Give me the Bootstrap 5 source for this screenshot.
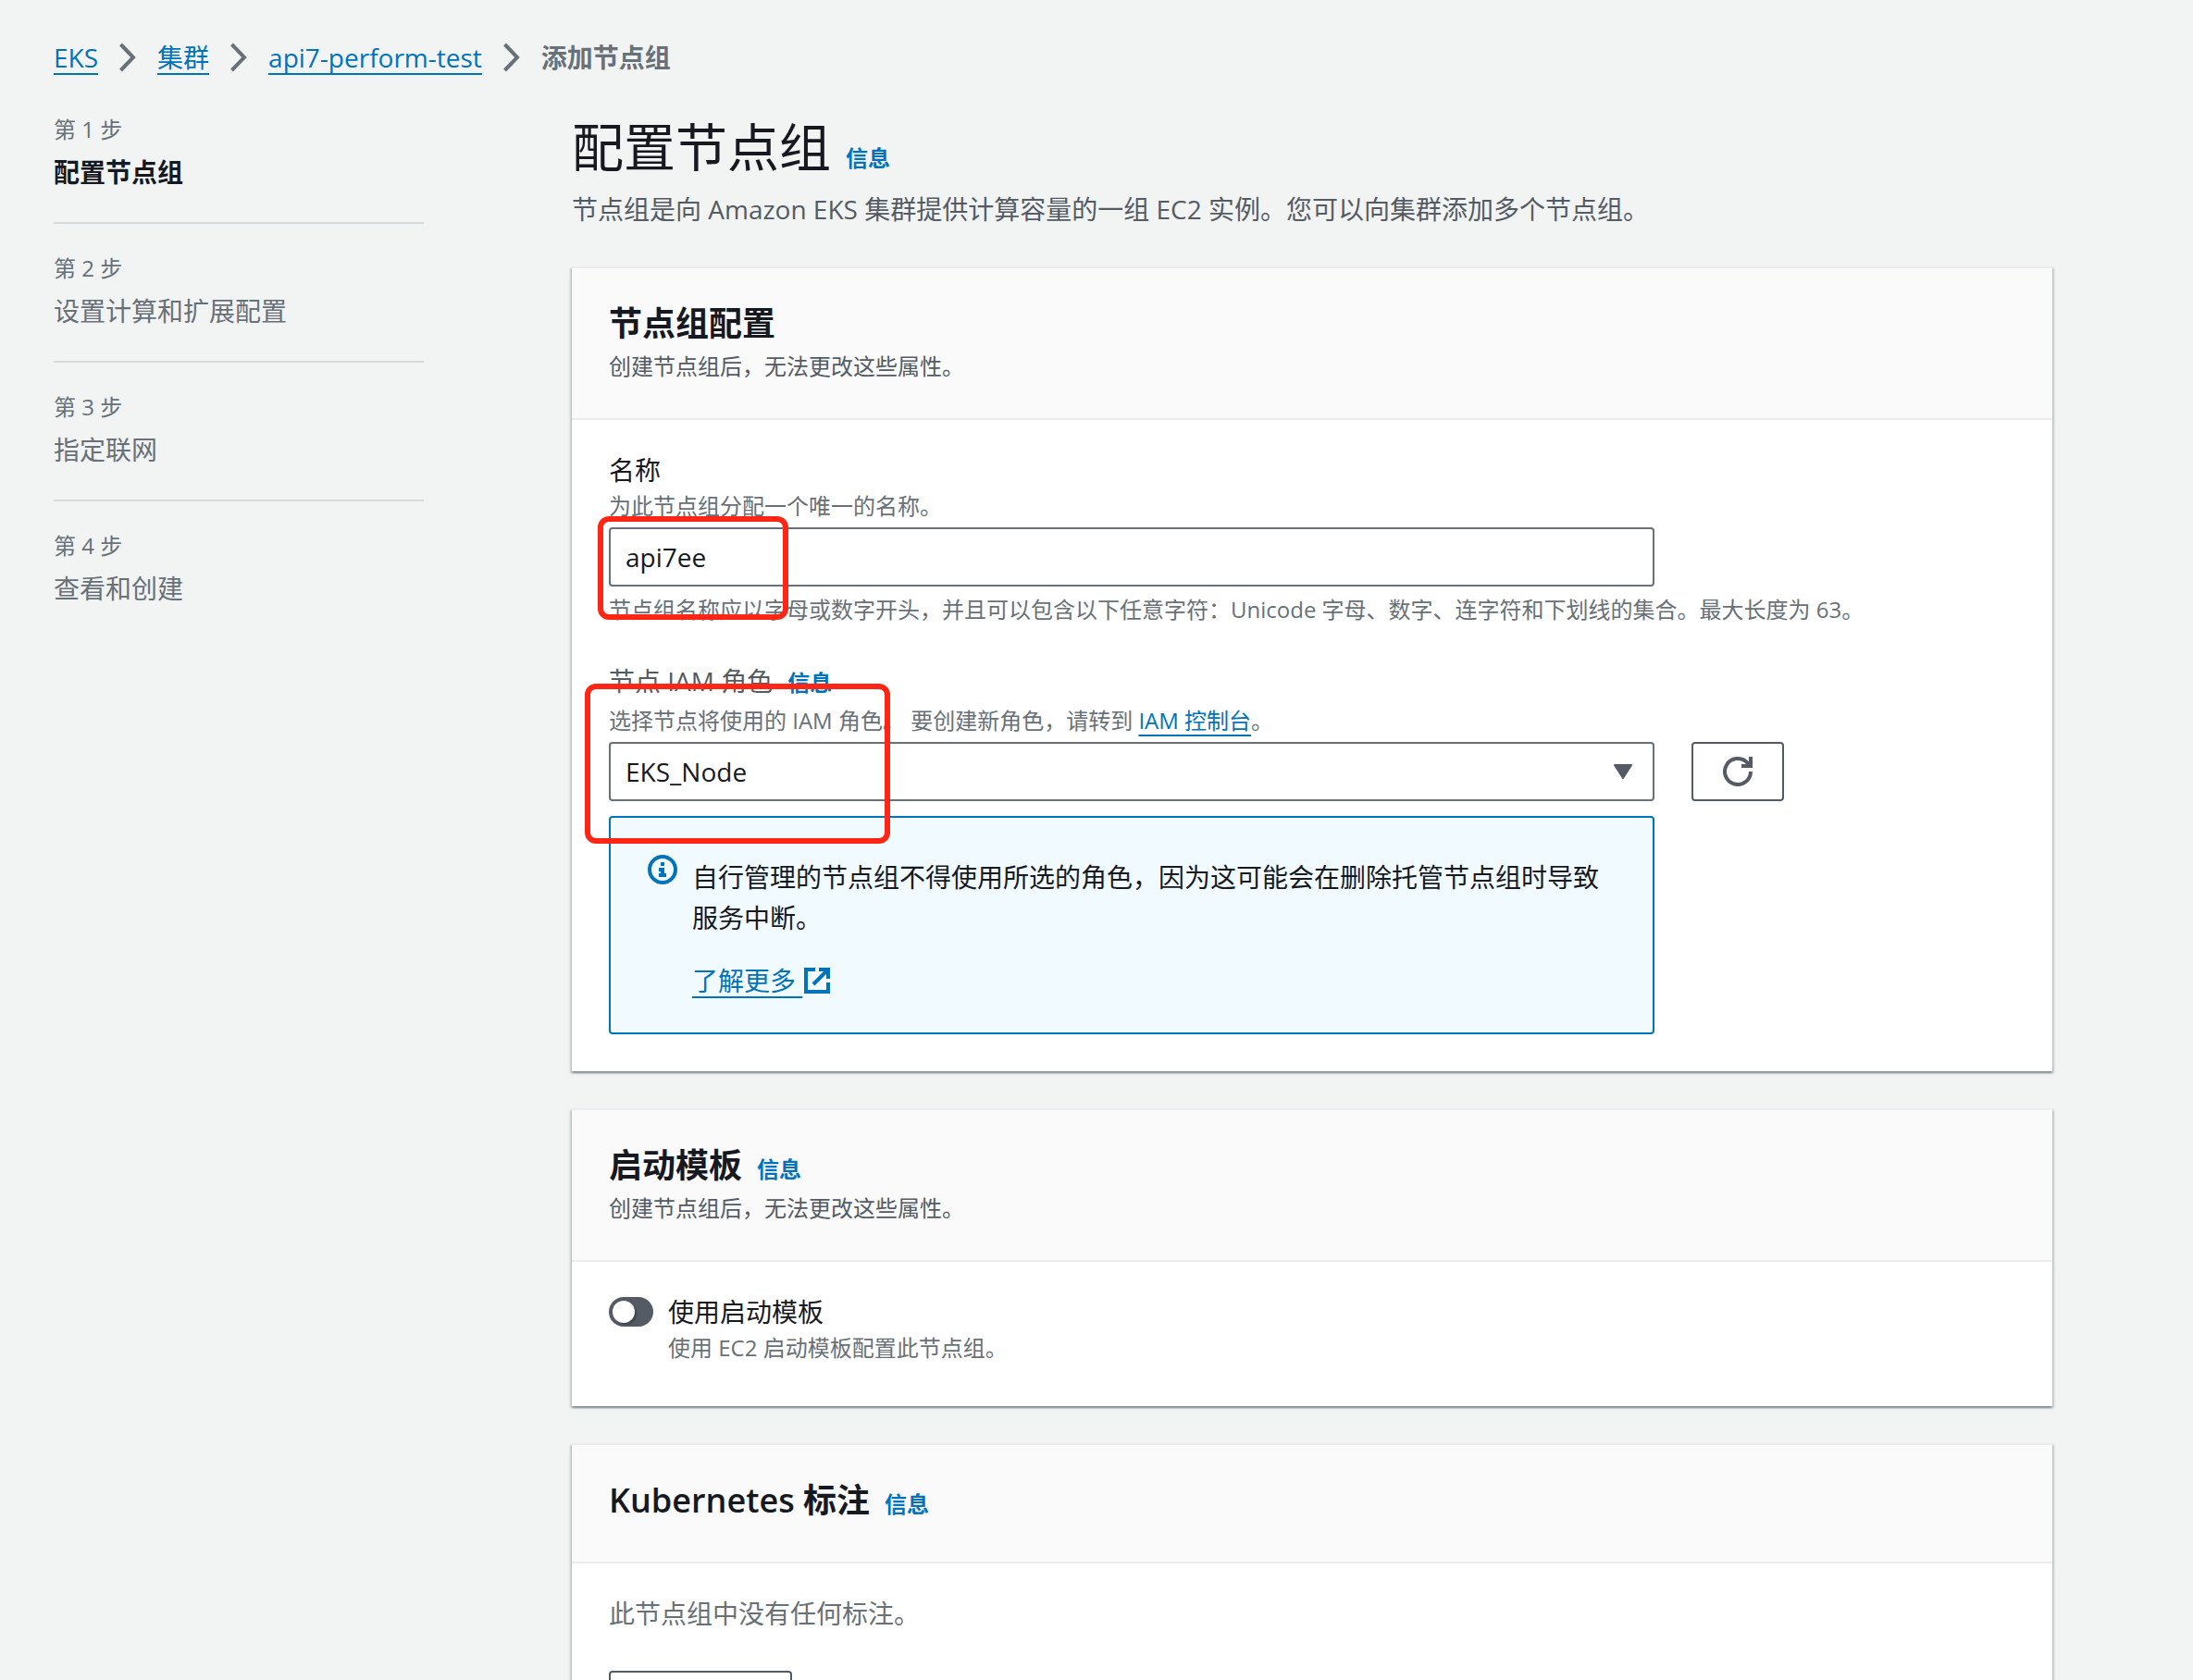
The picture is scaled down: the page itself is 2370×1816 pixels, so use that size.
<!DOCTYPE html>
<html lang="zh-CN">
<head>
<meta charset="utf-8">
<meta name="viewport" content="width=device-width, initial-scale=1">
<title>添加节点组</title>
<link href="https://cdn.jsdelivr.net/npm/bootstrap@5.3.0/dist/css/bootstrap.min.css" rel="stylesheet">
<style>
  body {
    font-family: "Open Sans", "Noto Sans CJK SC", sans-serif;
    font-size: 28px;
    line-height: 44px;
    color: #16191f;
    background: #f2f3f3;
  }
  a { color: #0073bb; text-decoration-thickness: 2px; text-underline-offset: 6px; text-decoration-skip-ink: none; }
  .page { padding: 40px 152px 0 58px; }
  .page-cols { --bs-gutter-x: 80px; }
  .crumbs { gap: 22px; color: #687078; }
  .crumbs svg { width: 20px; height: 32px; }
  .hint { font-size: 24px; line-height: 36px; color: #687078; }
  .muted { color: #687078; margin-bottom: 40px; }
  .soft { color: #545b64; }
  .info { font-size: 24px; line-height: 36px; font-weight: 700; text-decoration: none; margin-left: 16px; }
  .steps { max-width: 400px; padding-top: 8px; }
  .steps li { padding: 30px 0 32px; border-bottom: 2px solid #d5dbdb; color: #687078; }
  .steps li:last-child { border-bottom: 0; }
  .steps .hint { margin-bottom: 6px; }
  .steps .current { color: #16191f; font-weight: 700; }
  .page-title { font-size: 56px; line-height: 72px; font-weight: 400; margin: 38px 0 10px; }
  .page-desc { margin-bottom: 40px; }
  .panel {
    border: 0; border-top: 2px solid #eaeded; border-radius: 0; margin-bottom: 40px;
    color: inherit;
    box-shadow: 0 2px 2px 0 rgba(0,28,36,.3), 2px 2px 2px 0 rgba(0,28,36,.15), -2px 2px 2px 0 rgba(0,28,36,.15);
  }
  .panel-head { padding: 32px 40px 38px; background: #fafafa; border-bottom: 2px solid #eaeded; }
  .panel-head h2 { font-size: 36px; line-height: 56px; font-weight: 600; margin: 0; }
  .panel-body { padding: 32px 40px 40px; }
  .panel-body .hint { line-height: 34px; }
  .field { position: relative; }
  .field + .field { margin-top: 38px; }
  .field-row { --bs-gutter-x: 40px; margin-top: 6px; }
  .box {
    height: 64px; padding: 0 16px; font-size: 28px; line-height: 44px; color: #16191f;
    border: 2px solid #687078; border-radius: 4px; background: #fff;
  }
  .arrow { position: absolute; right: 24px; top: 24px; width: 20px; height: 16px; pointer-events: none; }
  .outline-btn { height: 64px; border: 2px solid #545b64; border-radius: 4px; color: #545b64; background: #fff; padding: 0 32px; }
  .outline-btn svg { display: block; }
  .add-btn { min-width: 198px; }
  .notice { margin: 16px 0 0; padding: 42px 40px 34px; border: 2px solid #0073bb; border-radius: 4px; background: #f1faff; color: inherit; gap: 16px; }
  .notice svg { flex: none; }
  .notice .status { margin-top: -2px; }
  .notice p { margin-bottom: 24px; }
  .notice a { white-space: pre; }
  .highlight { position: absolute; z-index: 3; border: 6px solid #ff2616; border-radius: 12px; pointer-events: none; }
  .highlight-name { left: -12px; top: 72px; width: 206px; height: 112px; }
  .highlight-role { left: -26px; top: 25px; width: 330px; height: 173px; }
  .switch { gap: 16px; padding: 0; margin: 0 0 6px; min-height: 0; }
  .switch .form-check-input {
    position: relative; float: none; flex: none; width: 48px; height: 32px; margin: 6px 0 0; border: 0; border-radius: 16px;
    background: #545b64;
  }
  .switch .form-check-input::before { content: ""; position: absolute; left: 4px; top: 4px; width: 24px; height: 24px; border-radius: 50%; background: #fff; box-shadow: 2px 2px 2px rgba(0,0,0,.25); }
</style>
<script src="https://cdn.jsdelivr.net/npm/bootstrap@5.3.0/dist/js/bootstrap.bundle.min.js"></script>
</head>
<body>
<div class="page vh-100 overflow-hidden">
  <nav aria-label="breadcrumb">
    <ol class="crumbs list-unstyled d-flex align-items-center mb-0">
      <li><a href="#">EKS</a></li>
      <li class="d-flex" aria-hidden="true"><svg viewBox="0 0 20 32" fill="none" stroke="#687078" stroke-width="4"><path d="M2.500 2 16 16 2.500 30"/></svg></li>
      <li><a href="#">集群</a></li>
      <li class="d-flex" aria-hidden="true"><svg viewBox="0 0 20 32" fill="none" stroke="#687078" stroke-width="4"><path d="M2.500 2 16 16 2.500 30"/></svg></li>
      <li><a href="#">api7-perform-test</a></li>
      <li class="d-flex" aria-hidden="true"><svg viewBox="0 0 20 32" fill="none" stroke="#687078" stroke-width="4"><path d="M2.500 2 16 16 2.500 30"/></svg></li>
      <li class="fw-bold" aria-current="page">添加节点组</li>
    </ol>
  </nav>

  <div class="row page-cols">
    <aside class="col-3">
      <ol class="steps list-unstyled mb-0">
        <li><div class="hint">第 1 步</div><div class="current">配置节点组</div></li>
        <li><div class="hint">第 2 步</div><div>设置计算和扩展配置</div></li>
        <li><div class="hint">第 3 步</div><div>指定联网</div></li>
        <li><div class="hint">第 4 步</div><div>查看和创建</div></li>
      </ol>
    </aside>

    <main class="col-9">
      <h1 class="page-title">配置节点组<a class="info" href="#">信息</a></h1>
      <p class="page-desc soft">节点组是向 Amazon EKS 集群提供计算容量的一组 EC2 实例。您可以向集群添加多个节点组。</p>

      <section class="card panel">
        <header class="panel-head">
          <h2>节点组配置</h2>
          <div class="hint soft">创建节点组后，无法更改这些属性。</div>
        </header>
        <div class="panel-body">
          <div class="field">
            <label class="d-block" for="name">名称</label>
            <div class="hint">为此节点组分配一个唯一的名称。</div>
            <div class="row field-row">
              <div class="col-9"><input class="form-control box" id="name" type="text" value="api7ee"></div>
            </div>
            <div class="hint mt-2">节点组名称应以字母或数字开头，并且可以包含以下任意字符：Unicode 字母、数字、连字符和下划线的集合。最大长度为 63。</div>
            <div class="highlight highlight-name"></div>
          </div>
          <div class="field">
            <div class="mb-1"><label class="soft" for="role">节点 IAM 角色</label><a class="info" href="#">信息</a></div>
            <div class="hint">选择节点将使用的 IAM 角色。 要创建新角色，请转到 <a href="#">IAM 控制台</a>。</div>
            <div class="row field-row">
              <div class="col-9">
                <div class="position-relative">
                  <select class="form-select box" id="role"><option>EKS_Node</option></select>
                  <svg class="arrow" viewBox="0 0 20 16"><path d="M1 1h18L10 15z" fill="#545b64" stroke="#545b64" stroke-width="2" stroke-linejoin="round"/></svg>
                </div>
                <div class="notice alert d-flex align-items-start" role="status">
                  <svg class="status" width="32" height="32" viewBox="0 0 32 32" fill="none"><circle cx="16" cy="16" r="14" stroke="#0073bb" stroke-width="4"/><path d="M14 8h4v4h-4zM12 14h6v6h2v4h-8v-4h2v-2h-2z" fill="#0073bb"/></svg>
                  <div>
                    <p>自行管理的节点组不得使用所选的角色，因为这可能会在删除托管节点组时导致服务中断。</p>
                    <div class="d-flex align-items-center"><a href="#">了解更多 </a><svg width="32" height="28" viewBox="0 0 32 28" fill="none" stroke="#0073bb" stroke-width="4"><path d="M14 2H4v24h24V16M18 2h10v10M28 2 12 18"/></svg></div>
                  </div>
                </div>
              </div>
              <div class="col-3">
                <button class="btn outline-btn" type="button" aria-label="刷新"><svg width="32" height="32" viewBox="0 0 32 32" fill="none" stroke="#545b64" stroke-width="4"><path d="M30 16a14 14 0 1 1-4-9.800l3 3M30 0v10H20"/></svg></button>
              </div>
            </div>
            <div class="highlight highlight-role"></div>
          </div>
        </div>
      </section>

      <section class="card panel">
        <header class="panel-head">
          <h2>启动模板<a class="info" href="#">信息</a></h2>
          <div class="hint soft">创建节点组后，无法更改这些属性。</div>
        </header>
        <div class="panel-body">
          <div class="switch form-check d-flex align-items-start">
            <input class="form-check-input" type="checkbox" id="template">
            <div><label class="d-block" for="template">使用启动模板</label><div class="hint">使用 EC2 启动模板配置此节点组。</div></div>
          </div>
        </div>
      </section>

      <section class="card panel">
        <header class="panel-head">
          <h2>Kubernetes 标注<a class="info" href="#">信息</a></h2>
        </header>
        <div class="panel-body">
          <p class="muted">此节点组中没有任何标注。</p>
          <button class="btn outline-btn add-btn" type="button" aria-label="添加标注"></button>
        </div>
      </section>
    </main>
  </div>
</div>
</body>
</html>
